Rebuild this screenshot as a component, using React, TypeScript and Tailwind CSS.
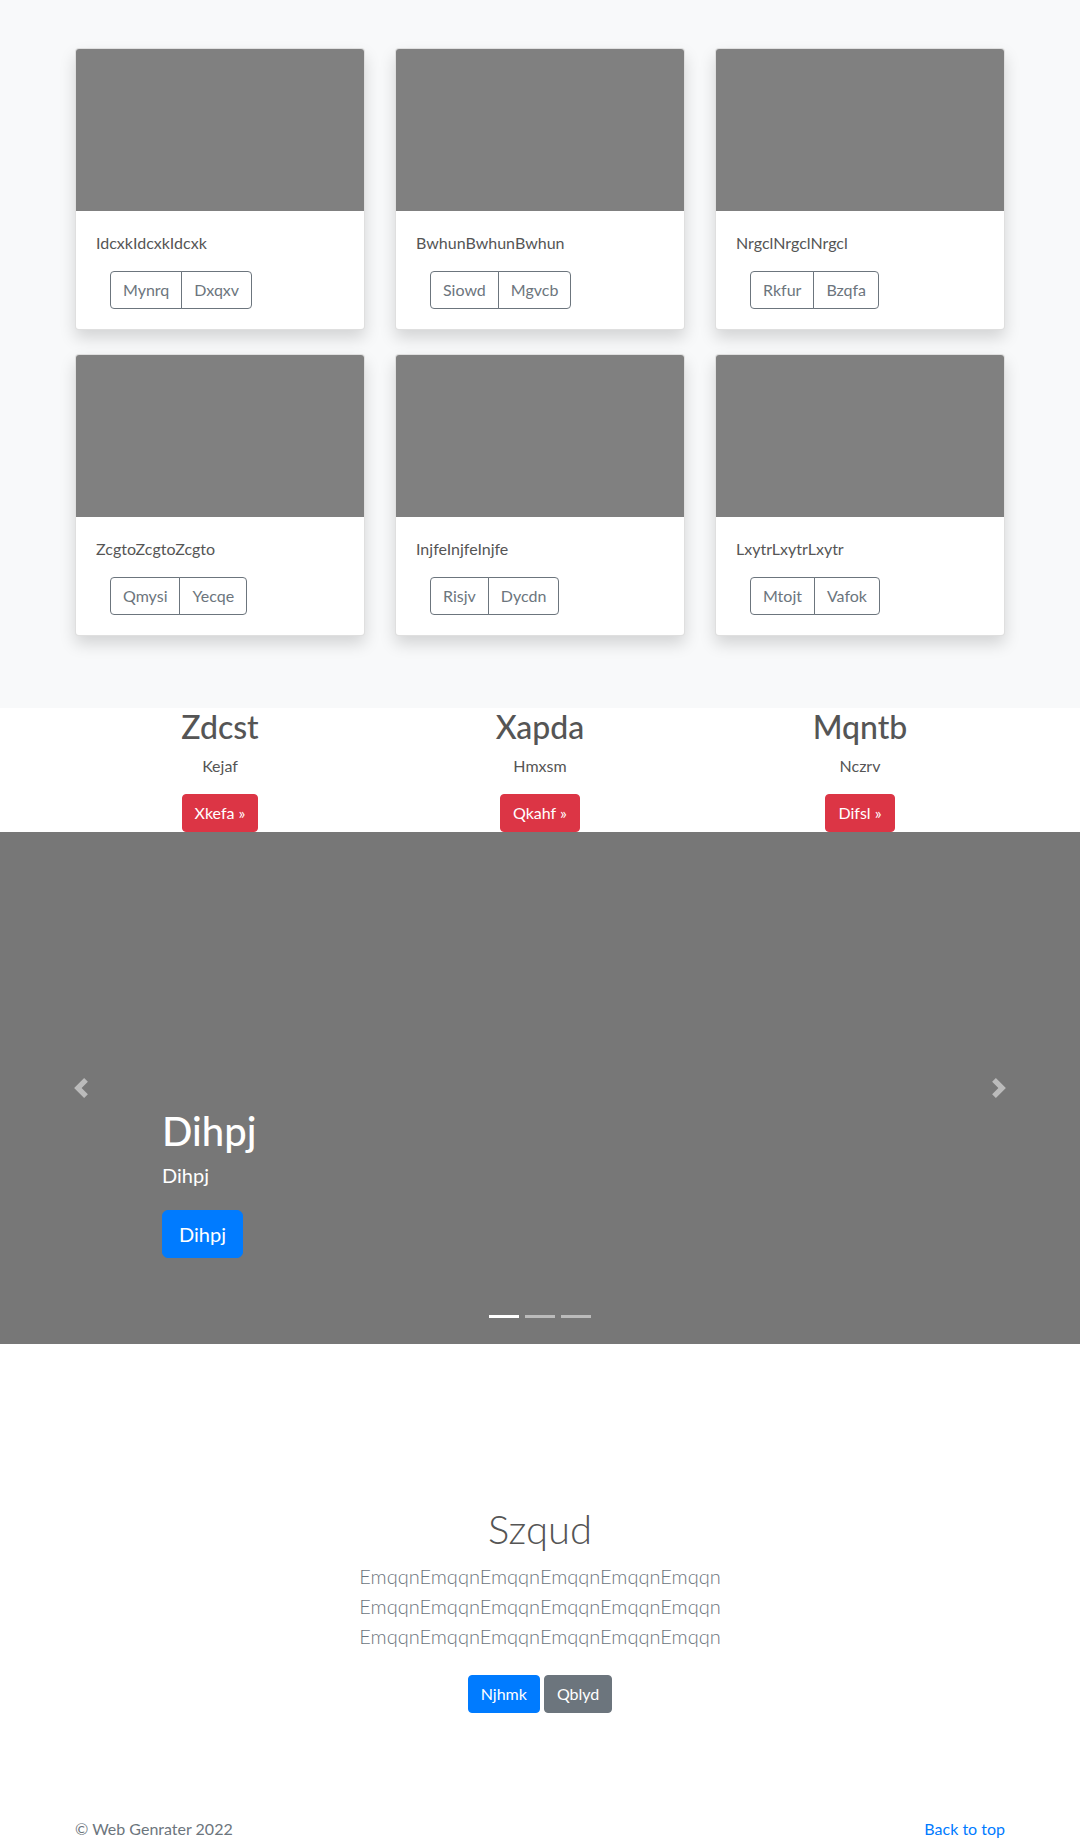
import React from "react";

const cards = [
  { title: "IdcxkIdcxkIdcxk", a: "Mynrq", b: "Dxqxv" },
  { title: "BwhunBwhunBwhun", a: "Siowd", b: "Mgvcb" },
  { title: "NrgclNrgclNrgcl", a: "Rkfur", b: "Bzqfa" },
  { title: "ZcgtoZcgtoZcgto", a: "Qmysi", b: "Yecqe" },
  { title: "InjfeInjfeInjfe", a: "Risjv", b: "Dycdn" },
  { title: "LxytrLxytrLxytr", a: "Mtojt", b: "Vafok" },
];

const features = [
  { title: "Zdcst", text: "Kejaf", btn: "Xkefa" },
  { title: "Xapda", text: "Hmxsm", btn: "Qkahf" },
  { title: "Mqntb", text: "Nczrv", btn: "Difsl" },
];

function AlbumCard({ title, a, b }: { title: string; a: string; b: string }) {
  return (
    <div className="flex flex-col rounded border border-black/[.125] bg-white shadow-[0_8px_16px_rgba(0,0,0,0.15)]">
      <div className="h-[162px] rounded-t-[3px] bg-[#808080]" />
      <div className="p-5">
        <p className="mb-4 text-base leading-6">{title}</p>
        <div className="ml-[14px] inline-flex">
          <button className="rounded-l border border-[#6c757d] px-3 py-1.5 text-base leading-6 text-[#6c757d]">
            {a}
          </button>
          <button className="-ml-px rounded-r border border-[#6c757d] px-3 py-1.5 text-base leading-6 text-[#6c757d]">
            {b}
          </button>
        </div>
      </div>
    </div>
  );
}

export default function App() {
  return (
    <div className="min-h-[1840px] bg-white text-[#555] font-['Lato','Liberation_Sans',sans-serif]">
      {/* album */}
      <section className="bg-[#f8f9fa] pb-[72px] pt-12">
        <div className="mx-auto grid w-[960px] grid-cols-3 gap-x-[30px] gap-y-6 px-[15px]">
          {cards.map((c) => (
            <AlbumCard key={c.title} {...c} />
          ))}
        </div>
      </section>

      {/* features */}
      <section className="h-[124px] bg-white">
        <div className="mx-auto grid w-[960px] grid-cols-3">
          {features.map((f) => (
            <div key={f.title} className="flex flex-col items-center text-center">
              <h2 className="mb-2 text-[32px] font-medium leading-[1.2]">{f.title}</h2>
              <p className="mb-4 text-base leading-6">{f.text}</p>
              <button className="rounded border border-[#dc3545] bg-[#dc3545] px-3 py-1.5 text-base leading-6 text-white">
                {f.btn} &raquo;
              </button>
            </div>
          ))}
        </div>
      </section>

      {/* carousel */}
      <section className="relative flex h-[512px] flex-col justify-end bg-[#777] pb-[86px] pl-[162px]">
        <h1 className="mb-[6px] text-[40px] font-medium leading-[1.2] text-white">Dihpj</h1>
        <p className="mb-[21px] text-xl leading-[28px] text-white">Dihpj</p>
        <div>
          <button className="rounded-md border border-[#007bff] bg-[#007bff] px-4 py-2 text-xl leading-[30px] text-white">
            Dihpj
          </button>
        </div>

        <div className="absolute bottom-0 left-0 top-0 flex w-[15%] items-center justify-center">
          <svg width="20" height="20" viewBox="0 0 8 8" fill="#fff" opacity="0.5">
            <path d="M5.25 0l-4 4 4 4 1.5-1.5L4.25 4l2.5-2.5L5.25 0z" />
          </svg>
        </div>
        <div className="absolute bottom-0 right-0 top-0 flex w-[15%] items-center justify-center">
          <svg width="20" height="20" viewBox="0 0 8 8" fill="#fff" opacity="0.5">
            <path d="M2.75 0l-1.5 1.5L3.75 4l-2.5 2.5L2.75 8l4-4-4-4z" />
          </svg>
        </div>
        <div className="absolute bottom-[26px] left-0 right-0 flex justify-center gap-[6px]">
          <span className="h-[3px] w-[30px] bg-white" />
          <span className="h-[3px] w-[30px] bg-white/50" />
          <span className="h-[3px] w-[30px] bg-white/50" />
        </div>
      </section>

      {/* jumbotron */}
      <section className="flex flex-col items-center pt-[161px] text-center">
        <h1 className="mb-2 text-[40px] font-light leading-[1.2]">Szqud</h1>
        <p className="mb-4 text-xl font-light leading-[30px] text-[#6c757d]">
          <span className="block">EmqqnEmqqnEmqqnEmqqnEmqqnEmqqn</span>
          <span className="block">EmqqnEmqqnEmqqnEmqqnEmqqnEmqqn</span>
          <span className="block">EmqqnEmqqnEmqqnEmqqnEmqqnEmqqn</span>
        </p>
        <div className="my-2 flex gap-1">
          <button className="rounded border border-[#007bff] bg-[#007bff] px-3 py-1.5 text-base leading-6 text-white">
            Njhmk
          </button>
          <button className="rounded border border-[#6c757d] bg-[#6c757d] px-3 py-1.5 text-base leading-6 text-white">
            Qblyd
          </button>
        </div>
      </section>

      {/* footer */}
      <footer className="mx-auto mt-[96px] flex w-[960px] justify-between px-[15px] text-base leading-6 text-[#6c757d]">
        <p>&copy; Web Genrater 2022</p>
        <a href="#" className="text-[#007bff]">
          Back to top
        </a>
      </footer>
    </div>
  );
}
